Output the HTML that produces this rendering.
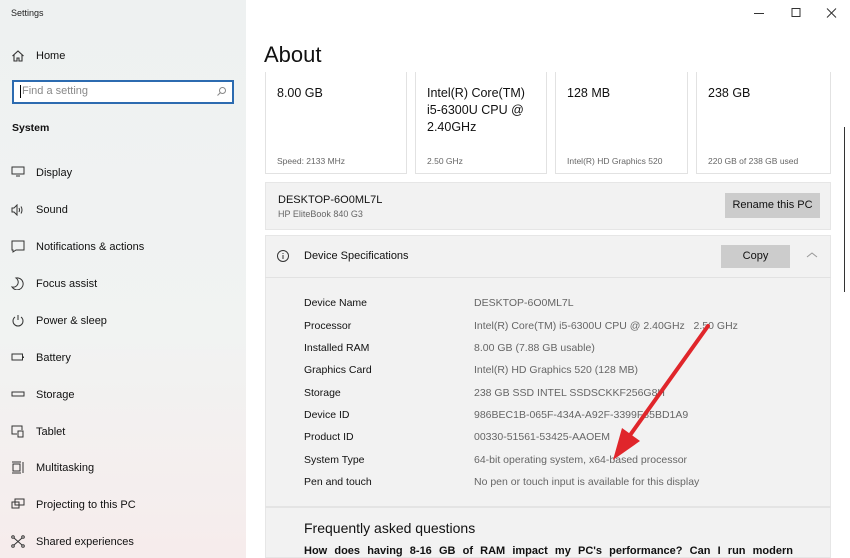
<!DOCTYPE html>
<html><head><style>
*{margin:0;padding:0;box-sizing:border-box}
body{width:850px;height:558px;overflow:hidden;font-family:"Liberation Sans",sans-serif;color:#000;background:#fff;position:relative}
.side{position:absolute;left:0;top:0;width:246px;height:558px;background:linear-gradient(180deg,#eef1f1 0%,#f1f3f2 60%,#f6ecec 100%)}
.abs{position:absolute}
.nav{position:absolute;left:36px;font-size:11px;color:#111}
.ico{position:absolute;left:11px}
.card{position:absolute;top:72px;height:102px;background:#fff;border:1px solid #e2e2e2;border-top:none}
.card .v{position:absolute;left:11px;top:13px;font-size:12.5px;line-height:17px;color:#111}
.card .s{position:absolute;left:11px;top:84px;font-size:8.5px;color:#666}
.lab{position:absolute;left:304px;font-size:10.5px;color:#111}
.val{position:absolute;left:474px;font-size:10.5px;color:#666}
</style></head><body>
<div class="side">
<div class="abs" style="left:11px;top:8px;font-size:9px;color:#222">Settings</div>
<svg class="ico" style="top:49px" width="14" height="14" viewBox="0 0 14 14" fill="none" stroke="#333" stroke-width="1.1"><path d="M1.5 7L7 2l5.5 5M3 6v6h3V9h2v3h3V6"/></svg>
<div class="nav" style="top:50px">Home</div>
<div class="abs" style="left:12px;top:80px;width:222px;height:24px;border:2px solid #2c6bb0;background:#fff"></div>
<div class="abs" style="left:20px;top:85px;width:1px;height:13px;background:#000"></div>
<div class="abs" style="left:22px;top:85px;font-size:11px;color:#888">Find a setting</div>
<svg class="abs" style="left:216px;top:86px" width="11" height="11" viewBox="0 0 11 11" fill="none" stroke="#888"><circle cx="6.5" cy="4.5" r="3"/><path d="M4.5 6.5L1.5 9.5"/></svg>
<div class="abs" style="left:12px;top:122px;font-size:10.5px;font-weight:bold;color:#111">System</div>

<svg class="ico" style="top:166px" width="14" height="12" viewBox="0 0 14 12" fill="none" stroke="#333"><rect x="1" y="1" width="12" height="7"/><path d="M5 10h4"/></svg>
<div class="nav" style="top:167px">Display</div>
<svg class="ico" style="top:204px" width="14" height="12" viewBox="0 0 14 12" fill="none" stroke="#333"><path d="M1 4h2l3-3v10L3 8H1zM8 4q1 2 0 4M10 2.5q2 3.5 0 7"/></svg>
<div class="nav" style="top:204px">Sound</div>
<svg class="ico" style="top:240px" width="14" height="13" viewBox="0 0 14 13" fill="none" stroke="#333"><path d="M1 1h12v9H5l-3 2v-2H1z"/></svg>
<div class="nav" style="top:241px">Notifications &amp; actions</div>
<svg class="ico" style="top:277px" width="14" height="13" viewBox="0 0 14 13" fill="none" stroke="#333"><path d="M5 1a6 6 0 1 1-4 9a5 5 0 0 0 4-9z"/></svg>
<div class="nav" style="top:278px">Focus assist</div>
<svg class="ico" style="top:314px" width="14" height="13" viewBox="0 0 14 13" fill="none" stroke="#333"><path d="M4 3a5 5 0 1 0 6 0M7 1v5"/></svg>
<div class="nav" style="top:315px">Power &amp; sleep</div>
<svg class="ico" style="top:353px" width="14" height="9" viewBox="0 0 14 9" fill="none" stroke="#333"><rect x="1" y="1" width="10.5" height="6"/><path d="M12.5 3.5v1.5"/></svg>
<div class="nav" style="top:352px">Battery</div>
<svg class="ico" style="top:391px" width="14" height="7" viewBox="0 0 14 7" fill="none" stroke="#333"><rect x="1" y="1" width="12" height="4"/></svg>
<div class="nav" style="top:389px">Storage</div>
<svg class="ico" style="top:425px" width="14" height="13" viewBox="0 0 14 13" fill="none" stroke="#333"><path d="M6 9H1V1h10v4"/><path d="M7 6h5v6H7z"/></svg>
<div class="nav" style="top:426px">Tablet</div>
<svg class="ico" style="top:461px" width="14" height="13" viewBox="0 0 14 13" fill="none" stroke="#333"><path d="M1 1h9M1 12h9M2 3h7v7H2zM12 1v11"/></svg>
<div class="nav" style="top:462px">Multitasking</div>
<svg class="ico" style="top:498px" width="14" height="12" viewBox="0 0 14 12" fill="none" stroke="#333"><path d="M4 1h9v6H4zM1 4h7v6H1z"/></svg>
<div class="nav" style="top:499px">Projecting to this PC</div>
<svg class="ico" style="top:535px" width="14" height="13" viewBox="0 0 14 13" fill="none" stroke="#333"><circle cx="2" cy="2" r="1.3"/><circle cx="12" cy="2" r="1.3"/><circle cx="2" cy="11" r="1.3"/><circle cx="12" cy="11" r="1.3"/><path d="M3 3l8 7M11 3l-8 7"/></svg>
<div class="nav" style="top:536px">Shared experiences</div>
</div>

<svg class="abs" style="left:752px;top:7px" width="90" height="12" viewBox="0 0 90 12" fill="none" stroke="#333"><path d="M2 6.5h10M40 1.5h8v8h-8zM75 1.5l9 9M84 1.5l-9 9"/></svg>

<div class="abs" style="left:264px;top:42px;font-size:22px;color:#111">About</div>

<div class="card" style="left:265px;width:142px"><div class="v">8.00 GB</div><div class="s">Speed: 2133 MHz</div></div>
<div class="card" style="left:415px;width:132px"><div class="v">Intel(R) Core(TM)<br>i5-6300U CPU @<br>2.40GHz</div><div class="s">2.50 GHz</div></div>
<div class="card" style="left:555px;width:133px"><div class="v">128 MB</div><div class="s">Intel(R) HD Graphics 520</div></div>
<div class="card" style="left:696px;width:135px"><div class="v">238 GB</div><div class="s">220 GB of 238 GB used</div></div>

<div class="abs" style="left:844px;top:127px;width:1px;height:165px;background:#333"></div>

<div class="abs" style="left:265px;top:182px;width:566px;height:48px;background:#f2f2f2;border:1px solid #e6e6e6"></div>
<div class="abs" style="left:278px;top:194px;font-size:11px;color:#111">DESKTOP-6O0ML7L</div>
<div class="abs" style="left:278px;top:209px;font-size:9px;color:#666">HP EliteBook 840 G3</div>
<div class="abs" style="left:725px;top:193px;width:95px;height:25px;background:#cccccc;font-size:11px;text-align:center;line-height:25px;color:#111">Rename this PC</div>

<div class="abs" style="left:265px;top:235px;width:566px;height:323px;background:#f2f2f2;border:1px solid #e6e6e6"></div>
<div class="abs" style="left:265px;top:277px;width:566px;height:1px;background:#e2e2e2"></div>
<svg class="abs" style="left:276px;top:249px" width="14" height="14" viewBox="0 0 14 14" fill="none" stroke="#333"><circle cx="7" cy="7" r="5.5"/><path d="M7 6v4M7 4v1"/></svg>
<div class="abs" style="left:304px;top:250px;font-size:11px;color:#111">Device Specifications</div>
<div class="abs" style="left:721px;top:245px;width:69px;height:23px;background:#cccccc;font-size:11px;text-align:center;line-height:23px;color:#111">Copy</div>
<svg class="abs" style="left:806px;top:251px" width="12" height="8" viewBox="0 0 12 8" fill="none" stroke="#999"><path d="M1 6l5-4 5 4"/></svg>

<div class="lab" style="top:297px">Device Name</div><div class="val" style="top:297px">DESKTOP-6O0ML7L</div>
<div class="lab" style="top:320px">Processor</div><div class="val" style="top:320px">Intel(R) Core(TM) i5-6300U CPU @ 2.40GHz &nbsp; 2.50 GHz</div>
<div class="lab" style="top:342px">Installed RAM</div><div class="val" style="top:342px">8.00 GB (7.88 GB usable)</div>
<div class="lab" style="top:364px">Graphics Card</div><div class="val" style="top:364px">Intel(R) HD Graphics 520 (128 MB)</div>
<div class="lab" style="top:387px">Storage</div><div class="val" style="top:387px">238 GB SSD INTEL SSDSCKKF256G8H</div>
<div class="lab" style="top:409px">Device ID</div><div class="val" style="top:409px">986BEC1B-065F-434A-A92F-3399F85BD1A9</div>
<div class="lab" style="top:431px">Product ID</div><div class="val" style="top:431px">00330-51561-53425-AAOEM</div>
<div class="lab" style="top:454px">System Type</div><div class="val" style="top:454px">64-bit operating system, x64-based processor</div>
<div class="lab" style="top:476px">Pen and touch</div><div class="val" style="top:476px">No pen or touch input is available for this display</div>

<div class="abs" style="left:265px;top:506px;width:566px;height:2px;background:#e4e4e4"></div>
<div class="abs" style="left:304px;top:520px;font-size:14px;color:#111">Frequently asked questions</div>
<div class="abs" style="left:304px;top:545px;width:489px;font-size:11px;font-weight:bold;color:#111;text-align:justify;text-align-last:justify;white-space:nowrap">How does having 8-16 GB of RAM impact my PC's performance? Can I run modern</div>

<svg class="abs" style="left:600px;top:320px" width="120" height="150" viewBox="0 0 120 150"><path d="M108 6L28 118" stroke="#e0262b" stroke-width="4" stroke-linecap="round"/><path d="M13 140L22 108L40 121z" fill="#e0262b"/></svg>
</body></html>
